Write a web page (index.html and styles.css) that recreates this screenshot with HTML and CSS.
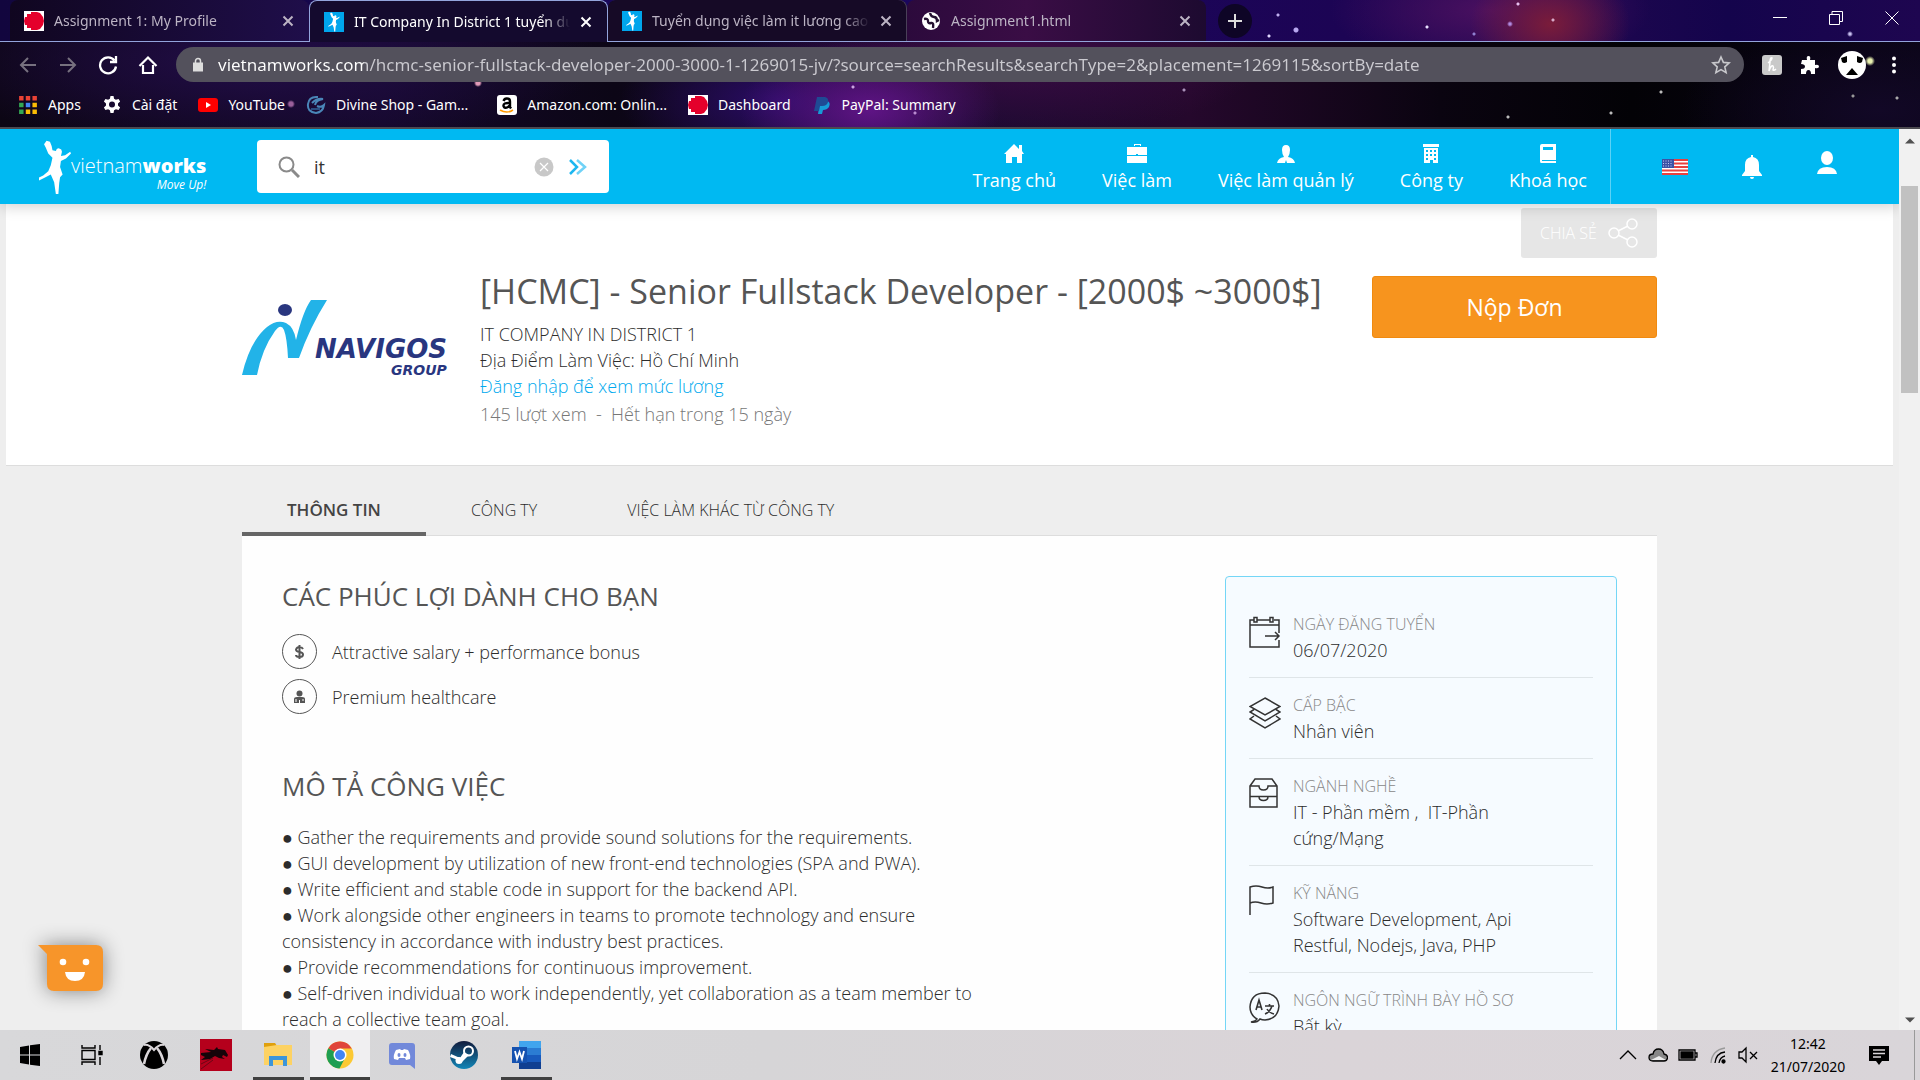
FILE: index.html
```html
<!DOCTYPE html>
<html lang="vi">
<head>
<meta charset="utf-8">
<title>IT Company In District 1 tuyển dụng</title>
<link rel="stylesheet" href="styles.css">
</head>
<body>
<svg class="sprite" aria-hidden="true">
  <symbol id="close" viewBox="0 0 12 12"><path d="M1.5 1.5l9 9M10.5 1.5l-9 9" fill="none" stroke="currentColor" stroke-width="2"/></symbol>
  <symbol id="runner" viewBox="0 0 38 64"><path fill="currentColor" d="M9 1l4 1 2 5 1 5 4 1q1-4 4-3 4 1 3 5l-1 4 5-1 6-4 1 2-6 6-6 3-1 7 3 9-3 3-1 7-1 13-3 0-2-14-4-9-8 4-6 3-1-3 6-3 6-5 3-7 2-9-5-5-3-7-2-4z"/></symbol>
  <symbol id="canvas" viewBox="0 0 20 20"><path fill="#fff" d="M0 0h20v20H0z"/><path fill="#e4002b" d="M7 1h6l3 1 3 4 1 4-1 4-3 4-3 1H7v-2H3v-3H1l-1-4 1-4h2V3h4z"/></symbol>
</svg>

<header class="chrome">
  <div class="tabstrip">
    <div class="tab">
      <svg class="fav"><use href="#canvas"/></svg>
      <span class="tab-title">Assignment 1: My Profile</span>
      <button class="tab-close" aria-label="Close tab"><svg><use href="#close"/></svg></button>
    </div>
    <div class="tab active">
      <svg class="fav vnw" viewBox="-10 -1 58 66"><use href="#runner" width="38" height="64"/></svg>
      <span class="tab-title">IT Company In District 1 tuyển dụng</span>
      <button class="tab-close" aria-label="Close tab"><svg><use href="#close"/></svg></button>
    </div>
    <div class="tab divided">
      <svg class="fav vnw" viewBox="-10 -1 58 66"><use href="#runner" width="38" height="64"/></svg>
      <span class="tab-title">Tuyển dụng việc làm it lương cao</span>
      <button class="tab-close" aria-label="Close tab"><svg><use href="#close"/></svg></button>
    </div>
    <div class="tab">
      <svg class="fav" viewBox="0 0 20 20"><circle cx="10" cy="10" r="9" fill="#fff"/><path d="M3 8q4-1 4 2t3 2 2 5M9 2q1 4 4 4t3 4l2-1" fill="none" stroke="#241030" stroke-width="2.4"/></svg>
      <span class="tab-title">Assignment1.html</span>
      <button class="tab-close" aria-label="Close tab"><svg><use href="#close"/></svg></button>
    </div>
    <button class="newtab" aria-label="New tab"><svg viewBox="0 0 16 16"><path d="M8 1v14M1 8h14" stroke="currentColor" stroke-width="2"/></svg></button>
    <div class="window-controls">
      <button aria-label="Minimize"><svg viewBox="0 0 14 14"><path d="M0 6.5h14"/></svg></button>
      <button aria-label="Restore"><svg viewBox="0 0 14 14"><path d="M.5 3.500h10v10H.5zM3 3V.5h10.500v10H11"/></svg></button>
      <button aria-label="Close"><svg viewBox="0 0 14 14"><path d="M.5.5l13 13M13.500.5l-13 13"/></svg></button>
    </div>
  </div>

  <div class="toolbar">
    <div class="nav-buttons">
      <button class="dim" aria-label="Back"><svg viewBox="0 0 20 20"><path d="M18 10H3M10 3l-7 7 7 7"/></svg></button>
      <button class="dim" aria-label="Forward"><svg viewBox="0 0 20 20"><path d="M2 10h15M10 3l7 7-7 7"/></svg></button>
      <button aria-label="Reload"><svg viewBox="0 0 20 20"><path d="M16.500 5.500A8 8 0 1 0 18 11.500M18 1v6h-6" stroke-width="2.300"/></svg></button>
      <button aria-label="Home"><svg viewBox="0 0 20 20"><path d="M5 10v8h10v-8M1.500 11L10 2.500l8.500 8.500" stroke-width="2.200"/></svg></button>
    </div>
    <div class="omnibox">
      <svg class="lock" viewBox="0 0 12 14"><path d="M1 5h10v9H1z" fill="#ddd"/><path d="M3.500 6V3.500a2.500 2.500 0 0 1 5 0V6" fill="none" stroke="#ddd" stroke-width="1.500"/></svg>
      <input class="url" type="text" aria-label="Address" value="vietnamworks.com/hcmc-senior-fullstack-developer-2000-3000-1-1269015-jv/?source=searchResults&amp;searchType=2&amp;placement=1269115&amp;sortBy=date">
      <button aria-label="Bookmark"><svg class="star" viewBox="0 0 20 20"><path d="M10 2l2.400 5.400 5.800.5-4.400 3.900 1.300 5.800L10 14.600l-5.100 3 1.300-5.800L1.800 7.900l5.800-.5z" fill="none" stroke="#c8c8cc" stroke-width="1.600"/></svg></button>
    </div>
    <div class="extensions">
      <button aria-label="Honey"><svg viewBox="0 0 20 20"><rect width="20" height="20" rx="3" fill="#c9c9c9"/><path d="M6 8q4-3 4-5-2-1-2 4l-1 9q2-6 4-5 1 1 0 4 1 1 3-1" fill="none" stroke="#fff" stroke-width="1.500"/></svg></button>
      <button aria-label="Extensions"><svg viewBox="0 0 20 20"><path fill="#fff" d="M2 5h5q-1-4 1.500-4T10 5h5v5q4-1 4 1.500T15 13v6h-4q0-4-2.500-4T6 19H1v-5q4 0 4-2.500T1 9z"/></svg></button>
      <button aria-label="Profile"><svg class="avatar" viewBox="0 0 28 28"><circle cx="14" cy="14" r="14" fill="#fff"/><path d="M3 7l6-2v6q-3 2-5 0zM25 7l-6-2v6q3 2 5 0zM14 17l6 7H8z" fill="#000"/></svg></button>
      <button aria-label="Menu"><svg viewBox="0 0 20 20" fill="#fff"><circle cx="10" cy="3.500" r="2"/><circle cx="10" cy="10" r="2"/><circle cx="10" cy="16.500" r="2"/></svg></button>
    </div>
  </div>

  <nav class="bookmarks" aria-label="Bookmarks">
    <a href="#"><svg viewBox="0 0 18 18"><path fill="#ea4335" d="M1 1h4v4H1zM7 1h4v4H7zM13 1h4v4h-4z"/><path fill="#34a853" d="M1 7h4v4H1zM1 13h4v4H1z"/><path fill="#4285f4" d="M7 7h4v4H7z"/><path fill="#fbbc05" d="M13 7h4v4h-4zM7 13h4v4H7zM13 13h4v4h-4z"/></svg>Apps</a>
    <a href="#"><svg viewBox="0 0 20 20"><path d="M8.500 1h3l.6 2.800 1.800 1 2.700-.9 1.500 2.600-2.100 1.900v2.200l2.100 1.900-1.500 2.600-2.700-.9-1.800 1-.6 2.800h-3l-.6-2.800-1.800-1-2.700.9-1.500-2.600L4 10.600V8.400L1.900 6.500l1.500-2.600 2.700.9 1.800-1z" fill="#fff"/><circle cx="10" cy="9.500" r="3" fill="#180a30"/></svg>Cài đặt</a>
    <a href="#"><svg viewBox="0 0 20 20"><rect y="3" width="20" height="14" rx="3" fill="#f00"/><path d="M8 7l5 3-5 3z" fill="#fff"/></svg>YouTube</a>
    <a class="shortened" href="#"><svg viewBox="0 0 20 20" fill="none" stroke="#4a86b8" stroke-width="2"><path d="M12 2Q3 1 2 9t8 9q7-1 8-8-3 3-7 1M6 8q5-5 11-4-7 1-8 6"/><path d="M5 14h9" stroke="#2b4c80"/></svg>Divine Shop - Gam...</a>
    <a href="#"><svg viewBox="0 0 20 20"><rect width="20" height="20" rx="3" fill="#fff"/><path d="M6.500 6q1-3 4-2.500 2.500.3 2.500 3V12l1 1.500M13 8Q6 7.500 6.500 11q1 3 4.500 1l2-2" fill="none" stroke="#000" stroke-width="2.400"/><path d="M3 15q7 4 13 0" fill="none" stroke="#f90" stroke-width="1.600"/></svg>Amazon.com: Onlin...</a>
    <a href="#"><svg><use href="#canvas"/></svg>Dashboard</a>
    <a href="#"><svg viewBox="0 0 20 20"><path fill="#179bd7" d="M8 6h7q4 1 2 6-2 3-6 3l-1 4H6z"/><path fill="#1f4a94" d="M5 2h8q4 1 3 5-1 4-6 4H8l-1 5H2z"/></svg>PayPal: Summary</a>
  </nav>
</header>

<div class="viewport">
  <div class="page">
    <header class="site-header">
      <a class="brand" href="#" aria-label="vietnamworks">
        <svg viewBox="0 0 38 64"><use href="#runner"/></svg>
        <span class="brand-text"><span>vietnam<b>works</b></span><em>Move Up!</em></span>
      </a>
      <form class="search">
        <svg class="search-icon" viewBox="0 0 22 22"><circle cx="8.500" cy="8.500" r="7" fill="none" stroke="#8a8a8a" stroke-width="2"/><path d="M14 14l7 7" stroke="#8a8a8a" stroke-width="3"/></svg>
        <input type="text" aria-label="Tìm việc" value="it">
        <button type="reset" aria-label="Xoá"><svg viewBox="0 0 20 20"><circle cx="10" cy="10" r="9.500" fill="#c8c8c8"/><path d="M6 6l8 8M14 6l-8 8" stroke="#fff" stroke-width="1.200"/></svg></button>
        <button type="submit" aria-label="Tìm"><svg viewBox="0 0 20 20" fill="none" stroke-width="2.500"><path d="M2 3l7 7-7 7" stroke="#1cb7f0"/><path d="M9 3l8 7-8 7" stroke="#6fd2f7"/></svg></button>
      </form>
      <nav class="site-nav">
        <a href="#"><svg viewBox="0 0 20 20"><path d="M0 10L10 0l5 5V1h3v6l2 3h-2v9h-5v-6H8v6H2v-9z"/></svg>Trang chủ</a>
        <a href="#"><svg viewBox="0 0 20 20"><path d="M7 2V0h7v2h-1V1H8v1zM0 3h20v8h-9v-1H9v1H0zM0 12h20v7H0z"/></svg>Việc làm</a>
        <a href="#"><svg viewBox="0 0 20 20"><path d="M10 1q4 0 4 5 0 4-2 7 6 1 7 6h-8l-1-3-1 3H1q1-5 7-6-2-3-2-7 0-5 4-5z"/></svg>Việc làm quản lý</a>
        <a href="#"><svg viewBox="0 0 20 20"><path fill-rule="evenodd" d="M2 0h16v3H2zM3 4h14v15h-5v-3H9v3H3zM5 6v2h2V6zM9 6v2h2V6zM13 6v2h2V6zM5 10v2h2v-2zM9 10v2h2v-2zM13 10v2h2v-2zM5 14v2h2v-2zM13 14v2h2v-2z"/></svg>Công ty</a>
        <a href="#"><svg viewBox="0 0 20 20"><path fill-rule="evenodd" d="M4 0h14v16H4v1h14v2H3q-1 0-1-2V2q0-2 2-2zM5 3v3h10V3z"/></svg>Khoá học</a>
      </nav>
      <div class="account">
        <button aria-label="English"><svg viewBox="0 0 26 16"><path fill="#fff" d="M0 0h26v16H0z"/><path d="M0 1h26M0 4.500h26M0 8h26M0 11.500h26M0 15h26" stroke="#e8413f" stroke-width="1.800"/><path fill="#3c52a5" d="M0 0h12v9H0z"/><path d="M1 2h10M1 4.500h10M1 7h10" stroke="#c5cdf0" stroke-dasharray="1 1.500"/></svg></button>
        <button aria-label="Thông báo"><svg viewBox="0 0 22 26" fill="#fff"><path d="M10 1h2v2q6 1 6 8v6l3 4v1H1v-1l3-4v-6q0-7 6-8zM9 23h4q0 2-2 2t-2-2z"/></svg></button>
        <button class="me" aria-label="Tài khoản"><svg viewBox="0 0 22 26" fill="#fff"><ellipse cx="11" cy="8" rx="6" ry="7"/><path d="M1 24q1-7 10-7t10 7z"/></svg></button>
      </div>
    </header>

    <section class="hero">
      <div class="container hero-grid">
        <svg class="company-logo" viewBox="0 0 210 78" role="img" aria-label="Navigos Group">
          <path fill="#22b3e8" d="M0 76Q8 42 25 28q10-8 19-4 8 4 10 17Q61 12 69 1h16Q68 28 57 59H46q-1-20-4-28-3-7-9 1Q20 50 15 76z"/>
          <ellipse cx="43" cy="11" rx="7" ry="6" fill="#29367f"/>
          <text x="73" y="59" class="navigos">NAVIGOS</text>
          <text x="149" y="76" class="navigos-small">GROUP</text>
        </svg>
        <div class="job">
          <h1>[HCMC] - Senior Fullstack Developer - [2000$ ~3000$]</h1>
          <p>IT COMPANY IN DISTRICT 1</p>
          <p>Địa Điểm Làm Việc: Hồ Chí Minh</p>
          <p><a href="#">Đăng nhập để xem mức lương</a></p>
          <p class="stats">145 lượt xem &nbsp;-&nbsp; Hết hạn trong 15 ngày</p>
        </div>
        <div class="actions">
          <button class="share">CHIA SẺ <svg viewBox="0 0 30 30" fill="none" stroke="#fff" stroke-width="1.500"><circle cx="6" cy="15" r="5"/><circle cx="24" cy="6" r="5"/><circle cx="24" cy="24" r="5"/><path d="M10 13l10-5M10 17l10 5"/></svg></button>
          <button class="apply">Nộp Đơn</button>
        </div>
      </div>
    </section>

    <main class="container">
      <nav class="job-tabs">
        <a class="current" href="#">THÔNG TIN</a>
        <a href="#">CÔNG TY</a>
        <a href="#">VIỆC LÀM KHÁC TỪ CÔNG TY</a>
      </nav>
      <div class="card">
        <div class="details">
          <section>
            <h2>CÁC PHÚC LỢI DÀNH CHO BẠN</h2>
            <ul class="benefits">
              <li><svg viewBox="0 0 35 35"><circle cx="17.500" cy="17.500" r="17"/><path d="M17.500 11v14M21 15q-1-2-3.500-2T14 15.500q0 2 3.500 2.500t3.500 2.500q0 2.500-3.500 2.500T14 21" stroke-width="2"/></svg>Attractive salary + performance bonus</li>
              <li><svg viewBox="0 0 35 35"><circle cx="17.500" cy="17.500" r="17"/><circle cx="17.500" cy="14.500" r="3" class="solid"/><path class="solid" d="M12 24v-4q0-2 3-2h5q3 0 3 2v4z"/><path d="M14 20v3M17.500 21v3M21 20v2" class="cut"/></svg>Premium healthcare</li>
            </ul>
          </section>
          <section>
            <h2>MÔ TẢ CÔNG VIỆC</h2>
            <div class="description">
              <p>● Gather the requirements and provide sound solutions for the requirements.</p>
              <p>● GUI development by utilization of new front-end technologies (SPA and PWA).</p>
              <p>● Write efficient and stable code in support for the backend API.</p>
              <p>● Work alongside other engineers in teams to promote technology and ensure consistency in accordance with industry best practices.</p>
              <p>● Provide recommendations for continuous improvement.</p>
              <p>● Self-driven individual to work independently, yet collaboration as a team member to reach a collective team goal.</p>
            </div>
          </section>
        </div>
        <aside class="summary">
          <dl>
            <div><svg viewBox="0 0 32 32"><path d="M5 4H1v27h29v-7M8 4h13M25 4h5v13M1 9h29M5 1.500h3V6H5zM21 1.500h3V6h-3zM16 20h14M26 16l4 4-4 4"/></svg><dt>NGÀY ĐĂNG TUYỂN</dt><dd>06/07/2020</dd></div>
            <div><svg viewBox="0 0 32 32"><path d="M16 1l15 8.500L16 18 1 9.500zM5 12.500L1 15l15 9 15-9-4-2.500M5 19l-4 3 15 9 15-9-4-3"/></svg><dt>CẤP BẬC</dt><dd>Nhân viên</dd></div>
            <div><svg viewBox="0 0 32 32"><path d="M1 8l5-7h17l5 7v21H1zM1 8h9q0 4 4.500 4T19 8h9M1 18.500h27M10 18.500q0 4 4.500 4t4.500-4"/></svg><dt>NGÀNH NGHỀ</dt><dd>IT - Phần mềm ,&nbsp; IT-Phần cứng/Mạng</dd></div>
            <div><svg viewBox="0 0 32 32"><path d="M1 30V2q6-2 12 0t11 0v16q-6 2-12 0T1 18"/></svg><dt>KỸ NĂNG</dt><dd>Software Development, Api Restful, Nodejs, Java, PHP</dd></div>
            <div><svg viewBox="0 0 32 32"><path d="M2 30q5-1 6-3Q1 23 1 15 2 1 16 1q13 1 14 13-1 13-14 14-3 0-5-1-3 4-9 3z"/><path d="M7 18l3-10 3 10M8 15h4M16 14h9M20.500 12v2M23 14q-2 6-7 8M18 17q2 4 7 5" stroke-width="1.600"/></svg><dt>NGÔN NGỮ TRÌNH BÀY HỒ SƠ</dt><dd>Bất kỳ</dd></div>
          </dl>
        </aside>
      </div>
    </main>

    <button class="chat" aria-label="Chat"><svg viewBox="0 0 65 46"><path fill="#f7952a" d="M0 0h58q7 0 7 7v32q0 7-7 7H16q-7 0-7-7V9z"/><circle cx="25" cy="17" r="3.300" fill="#fff"/><circle cx="48" cy="17" r="3.300" fill="#fff"/><path d="M27 27h20q-1 9-10 9t-10-9z" fill="#fff"/></svg></button>
  </div>
  <div class="scrollbar" aria-hidden="true">
    <svg viewBox="0 0 10 6"><path d="M0 5.500L5 .5l5 5z"/></svg>
    <div class="track"><div class="thumb"></div></div>
    <svg viewBox="0 0 10 6"><path d="M0 .5l5 5 5-5z"/></svg>
  </div>
</div>

<footer class="taskbar">
  <div class="apps">
    <button aria-label="Start"><svg viewBox="0 0 32 32"><path d="M6 8l9-1.500v9H6zM16 6.300L26 5v10.500H16zM6 16.500h9v9L6 24zM16 16.500h10V27l-10-1.300z"/></svg></button>
    <button aria-label="Task view"><svg viewBox="0 0 32 32" fill="none" stroke="#000" stroke-width="1.400"><path d="M6 6v3h13V6M6 26v-3h13v3M6 11.500h13v9H6zM24 6v5M24 18v8"/><path d="M23 12.500h3v3h-3z" fill="#000"/></svg></button>
    <button aria-label="Xbox"><svg viewBox="0 0 32 32"><circle cx="16" cy="16" r="14"/><path d="M6 6q5-1 10 5 5-6 10-5" fill="none" stroke="#dad6d9" stroke-width="2"/><path d="M13 9Q8 15 6 25M19 9q5 6 7 16" fill="none" stroke="#dad6d9" stroke-width="2.600"/></svg></button>
    <button aria-label="Dragon"><svg viewBox="0 0 32 32"><path fill="#b5001c" d="M0 0h32v32H0z"/><path d="M1 14l10-1-6-3 9 1 3-3 1 2 7 1 3 5-1 2-4-2-1 2 3 2-6-1-4-2-5 3-9 1 4-3-4-2z" fill="#160409"/><path d="M1 30l12-9M1 25l12-6" stroke="#6b0514"/></svg></button>
    <button class="open" aria-label="File Explorer"><svg viewBox="0 0 32 32"><path fill="#e0a00d" d="M2 4h11l2 3v4H2z"/><path fill="#fdd263" d="M2 8l13-2h15v20H2z"/><path fill="#3d95d9" d="M7 27V17h18v10h-4v-6H11v6z"/></svg></button>
    <button class="open focused" aria-label="Chrome"><svg viewBox="0 0 32 32"><circle cx="16" cy="16" r="13.500" fill="#fcc934"/><path d="M16 16L4.300 9.200A13.500 13.500 0 0 1 27.700 9.500H16z" fill="#e0443a"/><path d="M4.300 9.200A13.500 13.500 0 0 0 15.500 29.500L21 19l-5-3z" fill="#1e9e52"/><circle cx="16" cy="16" r="6.500" fill="#fff"/><circle cx="16" cy="16" r="5" fill="#4285f4"/></svg></button>
    <button aria-label="Discord"><svg viewBox="0 0 32 32"><path fill="#7289da" d="M6 4h20q3 0 3 3v23l-5-4H6q-3 0-3-3V7q0-3 3-3z"/><path fill="#fff" d="M10 11l4-1 1 1h2l1-1 4 1q3 5 2 9l-4 1-1-2h-6l-1 2-4-1q-1-4 2-9z"/><ellipse cx="13" cy="16" rx="1.500" ry="2" fill="#7289da"/><ellipse cx="19" cy="16" rx="1.500" ry="2" fill="#7289da"/></svg></button>
    <button aria-label="Steam"><svg viewBox="0 0 32 32"><defs><linearGradient id="steam" x2="0" y2="1"><stop stop-color="#111b3c"/><stop offset="1" stop-color="#1387b8"/></linearGradient></defs><circle cx="16" cy="16" r="14" fill="url(#steam)"/><circle cx="20.500" cy="12" r="4.500" fill="none" stroke="#fff" stroke-width="2"/><path d="M2 18l8 3 3 3 8-8-5-3-4 6-9-4z" fill="#fff"/><circle cx="11" cy="21.500" r="3.500" fill="#fff"/></svg></button>
    <button class="open" aria-label="Word"><svg viewBox="0 0 32 32"><path fill="#41a5ee" d="M9 2h22v7H9z"/><path fill="#2b7cd3" d="M9 9h22v7H9z"/><path fill="#185abd" d="M9 16h22v7H9z"/><path fill="#103f91" d="M9 23h22v7H9z"/><path fill="#1552b0" d="M2 8h15v16H2z"/><path d="M5 12l2 8 2.500-7L12 20l2-8" fill="none" stroke="#fff" stroke-width="1.800"/></svg></button>
  </div>
  <div class="tray">
    <button aria-label="Hidden icons"><svg viewBox="0 0 20 20"><path d="M2 14l8-8 8 8"/></svg></button>
    <button aria-label="OneDrive"><svg viewBox="0 0 20 20"><path d="M5 16q-4 0-4-3.500T5 9q1-5 5.500-5T16 9q4 1 3.500 4T16 16z" fill="#888"/><path d="M3 15l8-4 7 4z" fill="#eee" stroke="none"/></svg></button>
    <button aria-label="Battery"><svg viewBox="0 0 20 20"><path d="M1 5h16v10H1zM17.500 8h1.500v4h-1.500"/><path d="M3 7h12v6H3z" fill="#000"/></svg></button>
    <button aria-label="Network"><svg viewBox="0 0 20 20"><path d="M3 18Q4 5 17 3" stroke="#999"/><path d="M7 18Q8 8 17 7M11 18q1-6 6-7"/><circle cx="15.500" cy="16.500" r="1.500" fill="#000"/></svg></button>
    <button aria-label="Volume"><svg viewBox="0 0 20 20"><path d="M1 7h3l4-4v14l-4-4H1zM12 7l7 7M19 7l-7 7"/></svg></button>
    <time class="clock" datetime="2020-07-21T12:42"><span>12:42</span><span>21/07/2020</span></time>
    <button class="notice" aria-label="Notifications"><svg viewBox="0 0 20 20"><path d="M0 1h20v15h-7l-3 4-3-4H0z" fill="#000" stroke="none"/><path d="M4 5h12M4 8.500h12M4 12h8" stroke="#dad6d9"/></svg></button>
  </div>
</footer>
</body>
</html>
```
FILE: styles.css
```css
* { box-sizing: border-box; }

body {
  margin: 0;
  height: 100vh;
  display: flex;
  flex-direction: column;
  overflow: hidden;
  font-family: "Open Sans", "Noto Sans", sans-serif;
  font-size: 18px;
  line-height: 26px;
  font-weight: 300;
  color: #2c2c2c;
}

h1, h2, p, ul, dl, dt, dd { margin: 0; padding: 0; }
ul { list-style: none; }
a { color: inherit; text-decoration: none; }
svg { display: block; flex: none; }
button, input { font: inherit; color: inherit; border: 0; background: none; padding: 0; margin: 0; outline: 0; }
.sprite { position: absolute; width: 0; height: 0; }

/* Browser window */
.chrome {
  flex: none;
  border-bottom: 2px solid #4c4a50;
  color: #fff;
  font-family: "Noto Sans", "Open Sans", sans-serif;
  font-weight: 400;
  line-height: 20px;
  background:
    radial-gradient(circle at 478px 83px, #e09ab8 0 2px, transparent 4px),
    radial-gradient(circle at 291px 104px, #9a5f9a 0 2px, transparent 4px),
    radial-gradient(circle at 853px 87px, #c9a4e0 0 1px, transparent 2px),
    radial-gradient(circle at 915px 113px, #b98bd0 0 1px, transparent 2px),
    radial-gradient(circle at 1184px 90px, #a890b8 0 1px, transparent 2px),
    radial-gradient(circle at 1508px 117px, #bbb 0 1px, transparent 2px),
    radial-gradient(circle at 1661px 92px, #bbb 0 1px, transparent 2px),
    radial-gradient(circle at 1611px 113px, #bbb 0 1px, transparent 2px),
    radial-gradient(circle at 1870px 61px, #e8f0b0 0 2px, transparent 5px),
    radial-gradient(circle at 1853px 96px, #999 0 1px, transparent 2px),
    radial-gradient(circle at 1897px 98px, #aaa 0 1px, transparent 2px),
    radial-gradient(ellipse 130px 70px at 870px 110px, #5f1485, transparent),
    radial-gradient(ellipse 260px 90px at 1010px 50px, #3d0c46, transparent),
    radial-gradient(ellipse 160px 70px at 780px 100px, #2a0c66, transparent),
    radial-gradient(ellipse 340px 90px at 260px 60px, #220d48, transparent),
    radial-gradient(ellipse 200px 90px at 1880px 110px, #120826, transparent),
    linear-gradient(90deg, #0c0614, #14082a 20%, #0c0616 32%, #180a30 50%, #25082c 62%, #0a0410 75%, #030206 85%, #0a0516);
}

.tabstrip {
  height: 42px;
  display: flex;
  align-items: stretch;
  padding-left: 10px;
  border-bottom: 1px solid #93a4dc;
  background:
    radial-gradient(circle at 1427px 27px, #e8e0ff 0 1px, transparent 2px),
    radial-gradient(circle at 1518px 4px, #e8c0f0 0 1px, transparent 2px),
    radial-gradient(circle at 1510px 24px, #b08ae0 0 1px, transparent 3px),
    radial-gradient(circle at 1553px 20px, #d8a8c8 0 1px, transparent 2px),
    radial-gradient(circle at 1296px 30px, #b8a8f0 0 2px, transparent 3px),
    radial-gradient(circle at 1269px 36px, #e0d8ff 0 1px, transparent 2px),
    radial-gradient(circle at 1278px 15px, #c0b0f0 0 1px, transparent 2px),
    radial-gradient(circle at 1474px 34px, #9080d0 0 1px, transparent 2px),
    radial-gradient(circle at 1850px 34px, #c8c0f0 0 1px, transparent 3px),
    radial-gradient(ellipse 80px 60px at 1550px 24px, #7a1c3a, transparent),
    radial-gradient(ellipse 160px 60px at 1490px 10px, #4a1060, transparent),
    linear-gradient(90deg, #12063e, #1a0760 40%, #1c0454 70%, #220850 80%, #14044c 90%, #1e0650);
}

.tab {
  flex: 0 1 299px;
  min-width: 0;
  display: flex;
  align-items: center;
  gap: 10px;
  padding: 0 15px 0 14px;
  border-radius: 8px 8px 0 0;
  background: linear-gradient(90deg, #100620, #1f0e4a);
  color: #bcb4c4;
}
.tab + .tab { background: #160a26; }
.tab:nth-child(4) { background: linear-gradient(90deg, #2c0a3c, #3a0d45 40%, #1d0a30); }
.tab.active {
  height: 42px;
  background: #140a2e;
  border: 1px solid #93a4dc;
  border-bottom: 0;
  color: #fff;
}
.tab.divided { box-shadow: inset -1px 0 0 #4a4058; }
.fav { width: 20px; height: 20px; }
.vnw { background: #00a5ec; color: #fff; }
.tab-title {
  flex: 1;
  min-width: 0;
  overflow: hidden;
  white-space: nowrap;
  font-size: 14px;
  -webkit-mask-image: linear-gradient(90deg, #000 88%, transparent);
  mask-image: linear-gradient(90deg, #000 88%, transparent);
}
.tab-close svg { width: 12px; height: 12px; }
.newtab {
  width: 34px;
  height: 34px;
  margin: 4px 0 0 12px;
  border-radius: 50%;
  background: #0e0526;
  color: #ddd;
}
.newtab svg { width: 16px; height: 16px; margin: 0 auto; }
.window-controls { margin-left: auto; display: flex; }
.window-controls button { width: 56px; padding-bottom: 5px; }
.window-controls svg { width: 14px; height: 14px; margin: 0 auto; fill: none; stroke: #fff; }

.toolbar { display: flex; align-items: center; gap: 18px; padding: 5px 16px 5px 18px; }
.nav-buttons { display: flex; gap: 20px; }
.nav-buttons svg { width: 20px; height: 20px; fill: none; stroke: #fff; stroke-width: 2; }
.nav-buttons .dim svg { stroke: #77717f; }
.omnibox {
  flex: 1;
  display: flex;
  align-items: center;
  gap: 14px;
  height: 35px;
  padding: 0 13px 0 16px;
  border-radius: 18px;
  background: #53515c;
}
.lock { width: 12px; height: 15px; }
.url {
  flex: 1;
  min-width: 0;
  font-size: 17px;
  height: 34px;
  background: linear-gradient(90deg, #fff 146px, #cbcad0 146px);
  -webkit-background-clip: text;
  background-clip: text;
  -webkit-text-fill-color: transparent;
}
.star { width: 20px; height: 20px; }
.extensions { display: flex; align-items: center; gap: 18px; }
.extensions svg { width: 20px; height: 20px; }
.extensions .avatar { width: 28px; height: 28px; }

.bookmarks { display: flex; align-items: center; gap: 21px; height: 40px; padding: 0 18px 4px; font-size: 14px; }
.bookmarks a { display: flex; align-items: center; gap: 10px; white-space: nowrap; }
.bookmarks svg { width: 20px; height: 20px; }
.bookmarks .shortened { margin-right: 8px; }

/* Page area */
.viewport { flex: 1; min-height: 0; display: flex; background: #eee; }
.page { flex: 1; min-width: 0; overflow: hidden; position: relative; }
.container { max-width: 1415px; margin: 0 auto; }

.site-header {
  position: relative;
  z-index: 1;
  display: flex;
  align-items: center;
  height: 75px;
  padding-left: 36px;
  background: #00b9f2;
  color: #fff;
  box-shadow: 0 2px 14px rgba(0, 0, 0, .2);
}
.brand { display: flex; align-items: center; width: 172px; margin-right: 49px; }
.brand svg { width: 38px; height: 54px; margin-right: -3px; }
.brand-text { display: flex; flex-direction: column; padding-top: 14px; font-size: 20px; line-height: 22px; font-weight: 300; }
.brand-text b { font-weight: 800; }
.brand-text em { align-self: flex-end; font-size: 12px; line-height: 16px; font-weight: 400; }
.search {
  display: flex;
  align-items: center;
  gap: 14px;
  width: 352px;
  height: 53px;
  padding: 0 21px;
  border-radius: 4px;
  background: #fff;
  color: #333;
  font-weight: 400;
}
.search svg { width: 20px; height: 20px; }
.search .search-icon { width: 22px; height: 22px; }
.search input { flex: 1; min-width: 0; }
.site-nav { display: flex; align-self: stretch; margin-left: auto; border-right: 1px solid #5cd2f6; font-weight: 400; }
.site-nav a { display: flex; flex-direction: column; align-items: center; gap: 3px; padding: 15px 23px 0; white-space: nowrap; }
.site-nav svg { width: 20px; height: 20px; fill: #fff; }
.account { display: flex; align-items: center; gap: 53px; padding: 0 61px 0 51px; }
.account svg { width: 22px; height: 26px; }
.account .me { padding-bottom: 8px; }
.account button:first-child svg { width: 26px; height: 16px; }

.hero { margin: 0 6px; background: #fff; border-bottom: 1px solid #ddd; }
.hero-grid { display: grid; grid-template-columns: 210px 1fr 285px; column-gap: 28px; min-height: 261px; }
.company-logo { width: 210px; height: 78px; margin-top: 95px; overflow: visible; }
.navigos { font: italic 700 26px "DejaVu Sans", sans-serif; fill: #29367f; }
.navigos-small { font: italic 700 14px "DejaVu Sans", sans-serif; fill: #29367f; }
.job { padding-top: 63px; }
.job h1 { font-size: 34px; line-height: 48px; font-weight: 400; margin-bottom: 6px; white-space: nowrap; color: #555; }
.job a { color: #00a9ee; }
.job .stats { margin-top: 2px; color: #777; }
.actions { display: flex; flex-direction: column; gap: 18px; padding-top: 4px; }
.share {
  align-self: flex-end;
  display: flex;
  align-items: center;
  justify-content: center;
  gap: 11px;
  width: 136px;
  height: 50px;
  border-radius: 3px;
  background: #e6e6e6;
  color: #fff;
  font-size: 16px;
}
.share svg { width: 30px; height: 30px; }
.apply { height: 62px; border: 1px solid #f08a10; border-radius: 3px; background: #f7941e; color: #fff; font-size: 23px; font-weight: 400; }

.job-tabs { display: flex; padding-top: 16px; border-bottom: 1px solid #ddd; font-size: 16px; }
.job-tabs a { padding: 16px 45px 10px; margin-bottom: -1px; border-bottom: 4px solid transparent; line-height: 24px; }
.job-tabs .current { border-color: #666; font-size: 17px; font-weight: 600; color: #444; }

.card {
  display: grid;
  grid-template-columns: minmax(0, 720px) 392px;
  justify-content: space-between;
  padding: 40px 40px 60px;
  background: #fefefe;
}
.details section + section { margin-top: 52px; }
.details h2 { font-size: 26px; line-height: 40px; font-weight: 400; margin-bottom: 18px; color: #555; }
.benefits { display: flex; flex-direction: column; gap: 10px; }
.benefits li { display: flex; align-items: center; gap: 15px; }
.benefits svg { width: 35px; height: 35px; fill: none; stroke: #555; }
.benefits .solid { fill: #555; stroke: none; }
.benefits .cut { stroke: #fff; }

.summary { padding: 20px 23px; border: 1px solid #74d6f6; border-radius: 4px; background: #f6fbff; }
.summary dl > div { display: grid; grid-template-columns: 30px 245px; column-gap: 14px; padding: 14px 0; border-bottom: 1px solid #dfe5e8; }
.summary svg { width: 32px; height: 32px; margin-top: 5px; grid-row: span 2; fill: none; stroke: #333; stroke-width: 1.5px; }
.summary dt { font-size: 16px; color: #888; }

.chat { position: absolute; left: 38px; bottom: 39px; }
.chat svg { width: 65px; height: 46px; filter: drop-shadow(0 0 10px rgba(0, 0, 0, .45)); overflow: visible; }

.scrollbar { flex: none; width: 21px; display: flex; flex-direction: column; align-items: center; padding: 9px 0 7px; background: #f1f1f1; }
.scrollbar svg { width: 10px; height: 6px; fill: #505050; }
.track { flex: 1; width: 17px; padding-top: 42px; }
.thumb { height: 207px; background: #c1c1c1; }

/* Taskbar */
.taskbar {
  flex: none;
  height: 50px;
  display: flex;
  justify-content: space-between;
  background: linear-gradient(90deg, #d8d8da, #d6d5d7 40%, #dad4d8 70%, #d9d5d9);
  color: #000;
  font-family: "Noto Sans", "Open Sans", sans-serif;
  font-weight: 400;
  font-size: 14px;
  line-height: 23px;
}
.apps { display: flex; gap: 2px; }
.apps button { display: flex; align-items: center; justify-content: center; width: 60px; }
.apps svg { width: 32px; height: 32px; }
.apps .open { background: linear-gradient(#404040, #404040) no-repeat bottom / 51px 3px; }
.apps .focused { background-color: #f0eff1; background-size: 100% 3px; }
.tray { display: flex; align-items: center; gap: 10px; padding-right: 5px; }
.tray svg { width: 20px; height: 20px; fill: none; stroke: #000; stroke-width: 1.3px; }
.clock { display: flex; flex-direction: column; align-items: center; width: 78px; margin: 0 12px 0 1px; }
.notice { align-self: stretch; padding-right: 25px; border-right: 1px solid #999; }
```
